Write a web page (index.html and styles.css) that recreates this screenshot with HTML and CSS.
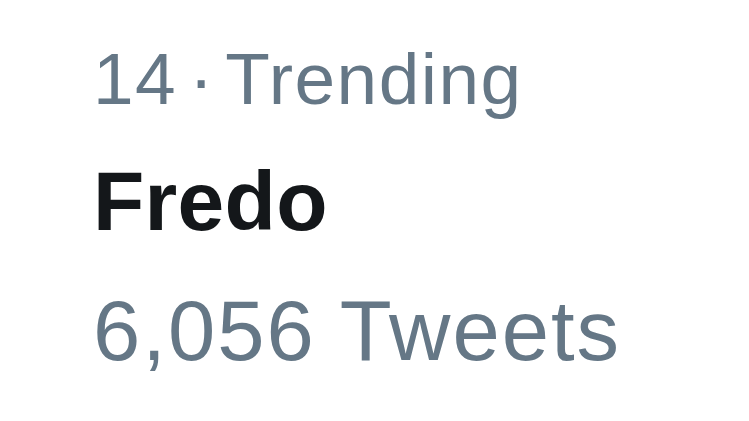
FILE: index.html
```html
<!DOCTYPE html>
<html>
<head>
<meta charset="utf-8">
<link rel="stylesheet" href="styles.css">
</head>
<body>
<div class="trend">
  <div class="meta">14 · Trending</div>
  <div class="name">Fredo</div>
  <div class="count">6,056 Tweets</div>
</div>
</body>
</html>
```

FILE: styles.css
```css
html, body {
  margin: 0;
  padding: 0;
  background: #ffffff;
}
.trend {
  display: flex;
  flex-direction: column;
  gap: 44px;
  padding: 42px 0 0 93px;
  font-family: "Liberation Sans", Arial, sans-serif;
}
.meta {
  font-size: 73px;
  line-height: 74px;
  color: #657786;
  letter-spacing: 1.5px;
  word-spacing: -10px;
}
.name {
  font-size: 84px;
  line-height: 83px;
  font-weight: 700;
  color: #14171a;
  letter-spacing: 0.3px;
}
.count {
  font-size: 85px;
  line-height: 87px;
  color: #657786;
  letter-spacing: 2px;
}
```
